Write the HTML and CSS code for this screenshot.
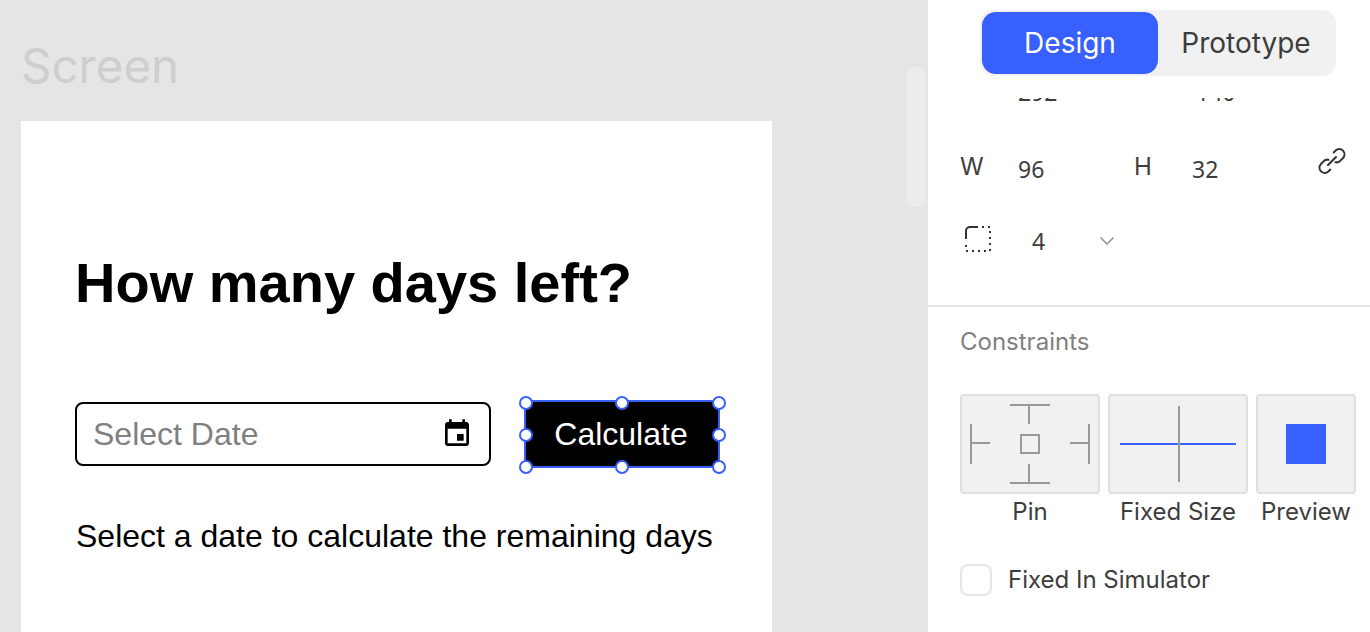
FILE: index.html
```html
<!DOCTYPE html>
<html lang="en">
<head>
    <meta charset="utf-8">
    <title>Screen - Design</title>
    <link rel="stylesheet" href="styles.css">
</head>
<body>
    <main class="canvas">
        <div class="canvas-label">Screen</div>
        <section class="frame">
            <h1>How many days left?</h1>
            <div class="form-row">
                <div class="date-input">
                    <span class="placeholder">Select Date</span>
                    <svg class="cal-icon" width="32" height="32" viewBox="0 0 24 24" fill="#000">
                        <path d="M17 12h-5v5h5v-5zM16 1v2H8V1H6v2H5c-1.11 0-1.99.9-1.99 2L3 19c0 1.1.89 2 2 2h14c1.1 0 2-.9 2-2V5c0-1.1-.9-2-2-2h-1V1h-2zm3 18H5V8h14v11z"/>
                    </svg>
                </div>
                <div class="selected">
                    <button class="calc-btn">Calculate</button>
                    <!-- selection handles -->
                    <span class="handle tl"></span>
                    <span class="handle tc"></span>
                    <span class="handle tr"></span>
                    <span class="handle ml"></span>
                    <span class="handle mr"></span>
                    <span class="handle bl"></span>
                    <span class="handle bc"></span>
                    <span class="handle br"></span>
                </div>
            </div>
            <p class="result">Select a date to calculate the remaining days</p>
        </section>
        <div class="scroll-thumb"></div>
    </main>

    <aside class="panel">
        <div class="tabs">
            <button class="tab active">Design</button>
            <button class="tab">Prototype</button>
        </div>

        <div class="props">
            <div class="clipped-row">
                <span class="clipped-val val-x">292</span>
                <span class="clipped-val val-y">140</span>
            </div>
            <div class="size-row">
                <span class="prop-label lbl-w">W</span>
                <span class="prop-val val-w">96</span>
                <span class="prop-label lbl-h">H</span>
                <span class="prop-val val-h">32</span>
                <svg class="link-icon" width="32" height="32" viewBox="0 0 28 28" fill="none" stroke="#333" stroke-width="1.800" stroke-linecap="round">
                    <path d="M15.500 6.500l1.700-1.700a4.600 4.600 0 0 1 6.500 6.500l-2.600 2.600a4.600 4.600 0 0 1-4 1.200"/>
                    <path d="M12.500 21.500l-1.700 1.700a4.600 4.600 0 0 1-6.500-6.500l2.600-2.600a4.600 4.600 0 0 1 4-1.200"/>
                    <path d="M10.500 17.500l7-7"/>
                </svg>
            </div>
            <div class="radius-row">
                <svg class="radius-icon" width="28" height="28" viewBox="0 0 28 28" fill="none" stroke="#333" stroke-width="2">
                    <path d="M2 14V6a4 4 0 0 1 4-4h8"/>
                    <path d="M18 2h2M24 2h2M26 6v2M26 12v2M26 18v2M26 24v2M20 26h2M14 26h2M8 26h2M2 26h2M2 20v2"/>
                </svg>
                <span class="prop-val val-r">4</span>
                <svg class="chev" width="16" height="10" viewBox="0 0 16 10" fill="none" stroke="#999" stroke-width="1.700">
                    <path d="M1.500 1.500L8 8l6.500-6.500"/>
                </svg>
            </div>
        </div>

        <div class="constraints">
            <h2>Constraints</h2>
            <div class="boxes">
                <div class="box-col">
                    <div class="box box-pin">
                        <svg width="140" height="100" viewBox="0 0 140 100" fill="none" stroke="#999" stroke-width="2">
                            <path d="M50 11h40M69 11v19M50 89h40M69 70v19M11 30v40M11 49h19M129 30v40M110 49h19"/>
                            <rect x="61" y="41" width="18" height="18"/>
                        </svg>
                    </div>
                    <span class="box-label">Pin</span>
                </div>
                <div class="box-col">
                    <div class="box box-fixed">
                        <svg width="140" height="100" viewBox="0 0 140 100" fill="none" stroke-width="2">
                            <path d="M12 50h116" stroke="#3860ff"/>
                            <path d="M71 12v76" stroke="#999"/>
                        </svg>
                    </div>
                    <span class="box-label">Fixed Size</span>
                </div>
                <div class="box-col">
                    <div class="box box-preview">
                        <div class="preview-square"></div>
                    </div>
                    <span class="box-label">Preview</span>
                </div>
            </div>
            <label class="check-row">
                <span class="checkbox"></span>
                <span class="check-text">Fixed In Simulator</span>
            </label>
        </div>
    </aside>
</body>
</html>
```

FILE: styles.css
```css
* {
    margin: 0;
    padding: 0;
    box-sizing: border-box;
}

body {
    width: 1370px;
    height: 632px;
    overflow: hidden;
    display: flex;
    font-family: Inter, 'Noto Sans', sans-serif;
    background: white;
}

/* canvas */
.canvas {
    position: relative;
    width: 928px;
    height: 632px;
    background: #e5e5e5;
    padding: 41px 0 0 21px;
}

.canvas-label {
    font-size: 47.5px;
    line-height: 50px;
    height: 80px;
    color: #cecece;
}

.frame {
    width: 751px;
    height: 511px;
    background: white;
    padding: 130px 0 0 54px;
    font-family: 'Liberation Sans', Arial, sans-serif;
    color: black;
}

.frame h1 {
    font-size: 56px;
    line-height: 64px;
    font-weight: 700;
    margin-bottom: 87px;
}

.form-row {
    display: flex;
    gap: 33px;
    height: 64px;
}

.date-input {
    width: 416px;
    height: 64px;
    border: 2px solid black;
    border-radius: 8px;
    display: flex;
    align-items: center;
    justify-content: space-between;
    padding: 0 16px 0 16px;
}

.placeholder {
    font-size: 32px;
    color: #808080;
}

.selected {
    position: relative;
    width: 196px;
    height: 68px;
    margin-top: -2px;
    border: 2px solid #3860ff;
}

.calc-btn {
    display: block;
    width: 100%;
    height: 100%;
    padding-right: 2px;
    background: black;
    color: white;
    border: none;
    border-radius: 3px;
    font-family: inherit;
    font-size: 32px;
}

.handle {
    position: absolute;
    width: 14px;
    height: 14px;
    background: white;
    border: 2px solid #3860ff;
    border-radius: 50%;
}

.tl { left: -7px; top: -6px; }
.tc { left: 89px; top: -6px; }
.tr { left: 186px; top: -6px; }
.ml { left: -7px; top: 26px; }
.mr { left: 186px; top: 26px; }
.bl { left: -7px; top: 58px; }
.bc { left: 89px; top: 58px; }
.br { left: 186px; top: 58px; }

.result {
    font-size: 32px;
    line-height: 40px;
    margin: 50px 0 0 1px;
}

.scroll-thumb {
    position: absolute;
    left: 906px;
    top: 67px;
    width: 20px;
    height: 140px;
    border-radius: 8px;
    background: #ececec;
}

/* right panel */
.panel {
    width: 442px;
    height: 632px;
    color: #3d3d3d;
    font-size: 24px;
}

.tabs {
    display: flex;
    width: 356px;
    height: 66px;
    margin: 10px 0 0 52px;
    padding: 2px;
    background: #f1f1f1;
    border-radius: 14px;
}

.tab {
    width: 176px;
    height: 62px;
    border: none;
    background: none;
    font-family: inherit;
    font-size: 28px;
    color: #3d3d3d;
    border-radius: 14px;
}

.tab.active {
    background: #3860ff;
    color: white;
}

.props {
    height: 231px;
    border-bottom: 2px solid #e5e5e5;
    padding: 22px 0 0 32px;
}

/* scrolled away under the tabs, only the bottom of the digits shows */
.clipped-row {
    position: relative;
    height: 4px;
    overflow: hidden;
}

.clipped-val {
    position: absolute;
    top: -21px;
    font-family: 'Noto Sans', sans-serif;
    font-size: 23px;
    line-height: 30px;
}

.val-x { left: 58px; }
.val-y { left: 236px; }

.size-row {
    position: relative;
    height: 30px;
    margin-top: 50px;
    display: flex;
    align-items: center;
}

.prop-label,
.prop-val {
    line-height: 30px;
}

.prop-val {
    font-family: 'Noto Sans', sans-serif;
    font-size: 23px;
}

.lbl-w { width: 58px; }
.val-w { width: 116px; padding-top: 3px; }
.lbl-h { width: 58px; }
.val-h { padding-top: 3px; }

.link-icon {
    position: absolute;
    left: 356px;
    top: -7px;
}

.radius-row {
    display: flex;
    align-items: center;
    height: 30px;
    margin-top: 42px;
    padding-left: 4px;
}

.val-r {
    margin-left: 40px;
    padding-top: 3px;
}

.chev {
    margin-left: 54px;
    margin-top: 4px;
}

.constraints {
    padding: 20px 0 0 32px;
}

.constraints h2 {
    font-size: 24px;
    font-weight: 400;
    line-height: 30px;
    color: #808080;
    margin-bottom: 37px;
}

.boxes {
    display: flex;
    gap: 8px;
}

.box-col {
    display: flex;
    flex-direction: column;
    align-items: center;
}

.box {
    width: 140px;
    height: 100px;
    background: #f1f1f1;
    border: 2px solid #e0e0e0;
    border-radius: 4px;
    display: flex;
    align-items: center;
    justify-content: center;
}

.box svg {
    flex-shrink: 0;
}

.box-preview {
    width: 100px;
}

.preview-square {
    width: 40px;
    height: 40px;
    background: #3860ff;
}

.box-label {
    line-height: 30px;
    margin-top: 3px;
    white-space: nowrap;
}

.check-row {
    display: flex;
    align-items: center;
    gap: 16px;
    margin-top: 37px;
}

.check-text {
    margin-top: -2px;
}

.checkbox {
    width: 32px;
    height: 32px;
    border: 2px solid #e5e5e5;
    border-radius: 8px;
}
```
